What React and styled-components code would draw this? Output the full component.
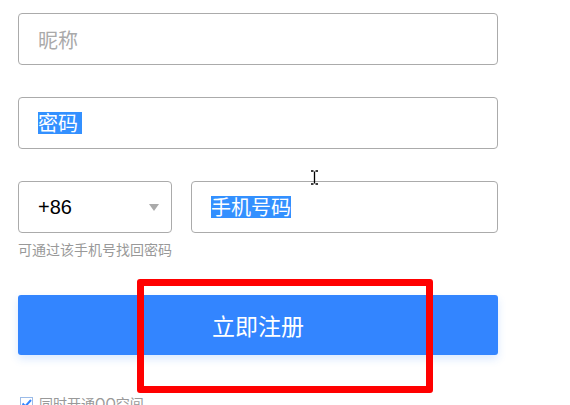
import styled, { createGlobalStyle } from "styled-components";

const GlobalStyle = createGlobalStyle`
  html, body {
    margin: 0;
    padding: 0;
    background: #fff;
    font-family: "Noto Sans CJK SC", "Liberation Sans", sans-serif;
    overflow: hidden;
  }
`;

function App() {
  return (
    <Page>
      <GlobalStyle />
      <Form>
        <Field>
          <Placeholder>昵称</Placeholder>
        </Field>
        <Field>
          <Selected>密码 </Selected>
        </Field>
        <PhoneBlock>
          <PhoneRow>
            <CountrySelect>
              <Code>+86</Code>
              <Arrow />
            </CountrySelect>
            <PhoneField>
              <Selected>手机号码</Selected>
            </PhoneField>
          </PhoneRow>
          <Hint>可通过该手机号找回密码</Hint>
        </PhoneBlock>
        <SubmitBtn>立即注册</SubmitBtn>
        <CheckRow>
          <svg width="13" height="13" viewBox="0 0 13 13">
            <rect x="0.5" y="0.5" width="12" height="12" fill="#fff" stroke="#9bbbe8" />
            <path d="M2.5 6.5 L5.3 9.3 L11 3" fill="none" stroke="#3385ff" strokeWidth="2" />
          </svg>
          <CheckLabel>同时开通QQ空间</CheckLabel>
        </CheckRow>
      </Form>
      <Cursor width="9" height="15" viewBox="0 0 9 15">
        <path d="M1 1 H3.5 M5.5 1 H8 M4.5 1.5 V13.5 M1 14 H3.5 M5.5 14 H8" stroke="#000" strokeWidth="1.3" fill="none" />
      </Cursor>
      <Annotation />
    </Page>
  );
}

const Page = styled.div`
  position: relative;
  width: 570px;
  height: 405px;
`;

const Form = styled.div`
  width: 480px;
  padding: 13px 0 0 18px;
  display: flex;
  flex-direction: column;
  gap: 32px;
`;

const Field = styled.div`
  flex: none;
  height: 52px;
  box-sizing: border-box;
  border: 1px solid #ababab;
  border-radius: 4px;
  display: flex;
  align-items: center;
  padding-left: 19px;
  font-size: 20px;
`;

const PhoneField = styled(Field)`
  flex: 1;
`;

const Placeholder = styled.span`
  color: #aaaaaa;
`;

const Selected = styled.span`
  background: #3390ff;
  color: #fff;
  line-height: 22px;
  white-space: pre;
`;

const PhoneBlock = styled.div`
  display: flex;
  flex-direction: column;
  gap: 7px;
`;

const PhoneRow = styled.div`
  display: flex;
  gap: 19px;
`;

const CountrySelect = styled(Field)`
  width: 154px;
  justify-content: space-between;
  padding-right: 12px;
`;

const Code = styled.span`
  font-family: "Liberation Sans", Arial, sans-serif;
  font-size: 20px;
  color: #000;
`;

const Arrow = styled.span`
  width: 0;
  height: 0;
  border-left: 5.5px solid transparent;
  border-right: 5.5px solid transparent;
  border-top: 7px solid #aaaaaa;
`;

const Hint = styled.div`
  font-size: 14px;
  line-height: 18px;
  color: #999;
`;

const SubmitBtn = styled.button`
  margin-top: 5px;
  height: 60px;
  border: none;
  border-radius: 3px;
  background: #3385ff;
  color: #fff;
  font-family: "Noto Sans CJK SC", sans-serif;
  font-size: 23px;
  box-shadow: 0 4px 8px rgba(51, 133, 255, 0.18);
  cursor: pointer;
`;

const CheckRow = styled.div`
  margin-top: 6px;
  display: flex;
  align-items: center;
  gap: 6px;
  padding-left: 2px;
`;

const CheckLabel = styled.span`
  font-size: 14px;
  color: #999;
`;

const Cursor = styled.svg`
  position: absolute;
  left: 310px;
  top: 170px;
`;

const Annotation = styled.div`
  position: absolute;
  left: 137px;
  top: 279px;
  width: 296px;
  height: 114px;
  box-sizing: border-box;
  border: 7px solid #ff0000;
  border-radius: 3px;
`;

export default App;
